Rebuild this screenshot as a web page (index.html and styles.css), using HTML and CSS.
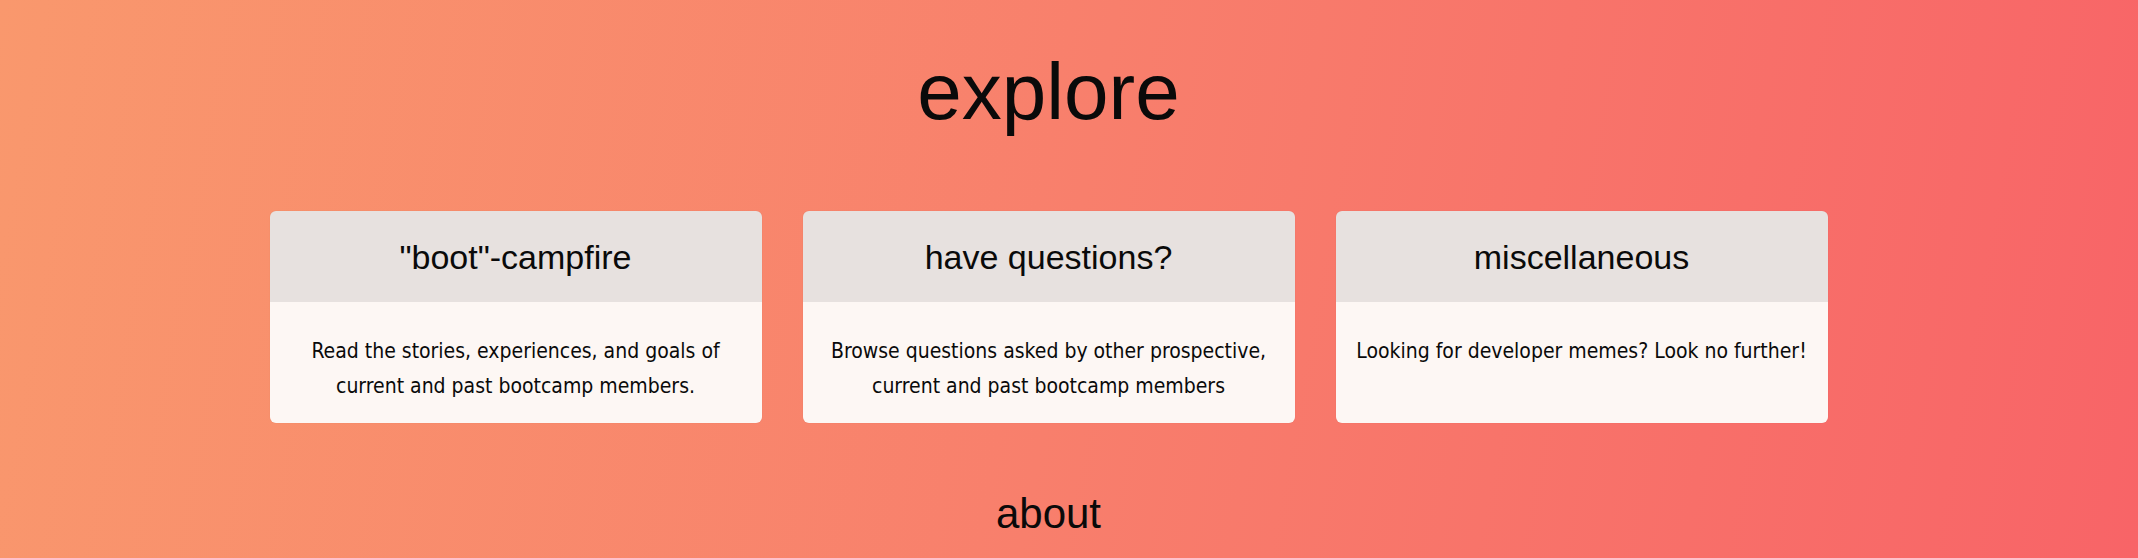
FILE: index.html
```html
<!DOCTYPE html>
<html lang="en">
<head>
<meta charset="utf-8">
<title>explore</title>
<link rel="stylesheet" href="styles.css">
</head>
<body>
<main class="page">
  <h1 class="title">explore</h1>
  <section class="cards">
    <article class="card">
      <h2 class="card-head">"boot"-campfire</h2>
      <p class="card-body">Read the stories, experiences, and goals of current and past bootcamp members.</p>
    </article>
    <article class="card">
      <h2 class="card-head">have questions?</h2>
      <p class="card-body">Browse questions asked by other prospective, current and past bootcamp members</p>
    </article>
    <article class="card">
      <h2 class="card-head">miscellaneous</h2>
      <p class="card-body">Looking for developer memes? Look no further!</p>
    </article>
  </section>
  <h2 class="about">about</h2>
</main>
</body>
</html>
```

FILE: styles.css
```css
html, body {
  margin: 0;
  padding: 0;
}
body {
  width: 100%;
  height: 558px;
  overflow: hidden;
  background: linear-gradient(100deg, #f9986d 0%, #f87f6c 50%, #f86467 100%);
  font-family: "Liberation Sans", Arial, sans-serif;
  color: #0a0a0a;
}
.page {
  display: flex;
  flex-direction: column;
  align-items: center;
  padding-right: 41px;
}
.title {
  margin: 46px 0 0;
  font-size: 80px;
  font-weight: 400;
  line-height: 92px;
}
.cards {
  display: flex;
  justify-content: center;
  gap: 41px;
  margin-top: 73px;
}
.card {
  width: 492px;
  border-radius: 6px;
  overflow: hidden;
  display: flex;
  flex-direction: column;
  box-shadow: 0 0 1px rgba(0,0,0,0.15);
}
.card-head {
  margin: 0;
  height: 91px;
  display: flex;
  align-items: center;
  justify-content: center;
  background: #e7e1df;
  font-size: 34px;
  font-weight: 400;
  padding-top: 2px;
  box-sizing: border-box;
}
.card-body {
  margin: 0;
  flex: 1;
  background: #fdf7f4;
  padding: 32px 12px 19px;
  text-align: center;
  font-family: "DejaVu Sans Condensed", "DejaVu Sans", sans-serif;
  font-size: 21px;
  line-height: 35px;
  height: 121px;
  box-sizing: border-box;
}
.about {
  margin: 67px 0 0;
  font-size: 42px;
  font-weight: 400;
  line-height: 48px;
}
```
